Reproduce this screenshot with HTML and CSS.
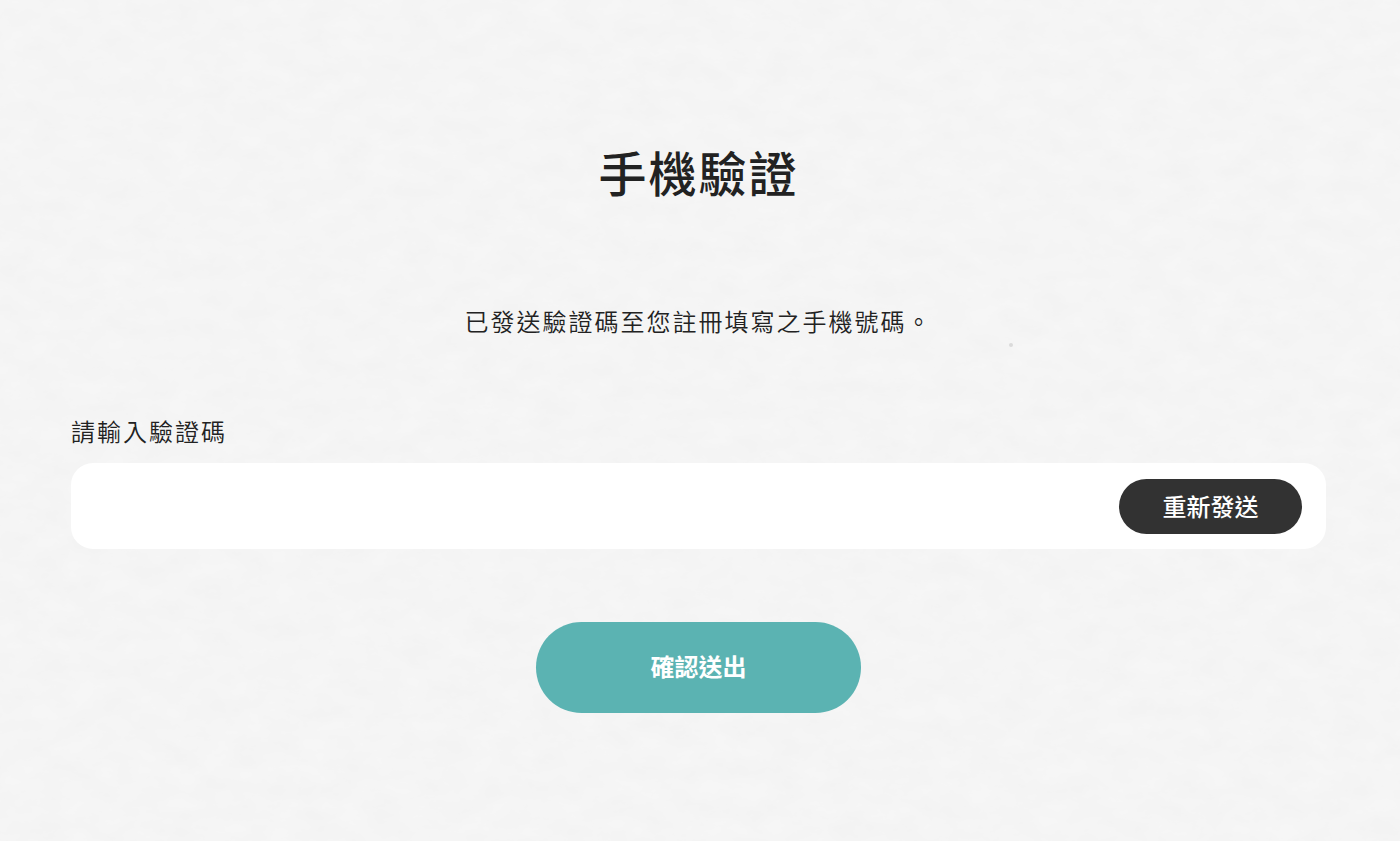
FILE: index.html
```
<!DOCTYPE html>
<html lang="zh-Hant">
<head>
<meta charset="UTF-8">
<meta name="viewport" content="width=device-width, initial-scale=1.0">
<title>手機驗證</title>
<link rel="stylesheet" href="styles.css">
</head>
<body>
<!-- paper texture -->
<svg class="paper" aria-hidden="true">
<filter id="grain" x="0" y="0" width="100%" height="100%" color-interpolation-filters="sRGB">
<feTurbulence type="fractalNoise" baseFrequency="0.03 0.05" numOctaves="5" seed="7"/>
<feColorMatrix type="matrix" values="0.02 0 0 0 0.949  0.02 0 0 0 0.949  0.02 0 0 0 0.949  0 0 0 0 1"/>
</filter>
<rect width="100%" height="100%" filter="url(#grain)"/>
<circle cx="1011" cy="345" r="2" fill="#dadada"/>
</svg>
<main class="verify">
<h1 class="verify-title">手機驗證</h1>
<p class="verify-text">已發送驗證碼至您註冊填寫之手機號碼。</p>
<form class="verify-form">
<label class="code-label" for="code">請輸入驗證碼</label>
<div class="code-box">
<input class="code-input" type="text" id="code" name="code" autocomplete="one-time-code">
<button class="resend" type="button">重新發送</button>
</div>
<button class="submit" type="submit">確認送出</button>
</form>
</main>
</body>
</html>
```

FILE: styles.css
```
* { box-sizing: border-box; }
body { margin: 0; background-color: #f4f4f4; color: #222; font-family: "Noto Sans CJK TC", sans-serif; font-size: 24px; line-height: 36px; }
.paper { position: absolute; top: 0; left: 0; width: 100%; height: 100%; z-index: -1; }
.verify { padding: 135px 74px 128px 71px; }
.verify-title { margin: 0 0 96px; font-size: 48px; line-height: 72px; font-weight: 500; letter-spacing: 2px; text-align: center; }
.verify-text { margin: 0 0 74px; font-weight: 350; letter-spacing: 2px; text-align: center; }
.code-label { display: block; margin-bottom: 14px; font-weight: 350; letter-spacing: 2px; }
.code-box { display: flex; align-items: center; height: 86px; padding-right: 24px; background-color: white; border-radius: 22px; }
.code-input { flex: 1; min-width: 0; height: 86px; padding: 0 24px; border: none; outline: none; background: transparent; font: inherit; color: inherit; }
.resend, .submit { padding: 0; border: none; color: white; font-family: inherit; font-size: 24px; line-height: 36px; font-weight: 500; cursor: pointer; }
.resend { width: 183px; height: 55px; background-color: #323232; border-radius: 28px; }
.submit { display: block; width: 325px; height: 91px; margin: 73px auto 0; padding-bottom: 4px; font-weight: 700; background-color: #5bb3b2; border-radius: 46px; }
```
